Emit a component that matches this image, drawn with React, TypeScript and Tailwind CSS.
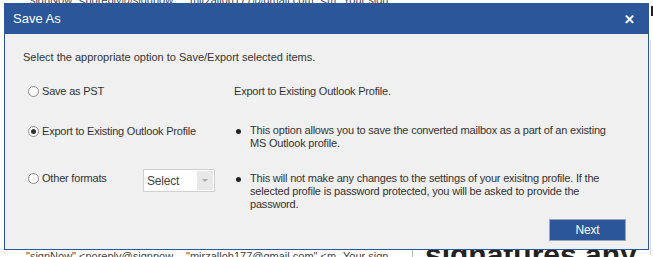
import React from "react";

function Radio({ checked }: { checked?: boolean }) {
  return (
    <span className="w-[11px] h-[11px] rounded-full border border-[#8a8a8a] bg-white flex items-center justify-center shrink-0">
      {checked && <span className="w-[5px] h-[5px] rounded-full bg-[#333]" />}
    </span>
  );
}

function Bullet({ children }: { children: React.ReactNode }) {
  return (
    <div className="flex items-start">
      <span className="w-[5px] h-[5px] rounded-full bg-[#222] mt-[5px] ml-[2px] mr-[9px] shrink-0" />
      <p className="leading-[13px] whitespace-nowrap">{children}</p>
    </div>
  );
}

function MailRow() {
  return (
    <div className="flex text-[11px] text-[#444] whitespace-nowrap">
      <span className="w-[160px] overflow-hidden">"signNow" &lt;noreply@signnow</span>
      <span className="w-[157px] overflow-hidden">"mirzalloh177@gmail.com" &lt;m</span>
      <span className="w-[45px] overflow-hidden">Your sign</span>
    </div>
  );
}

export default function App() {
  return (
    <div
      className="relative w-[653px] h-[257px] bg-white overflow-hidden text-[#333]"
      style={{ fontFamily: '"Liberation Sans", Arial, sans-serif' }}
    >
      {/* page behind the dialog */}
      <div className="absolute left-[26px] -top-[8px]">
        <MailRow />
      </div>
      <div className="absolute left-[26px] top-[248px]">
        <MailRow />
      </div>
      <div className="absolute left-[412px] top-[238px] w-px h-[19px] bg-[#bbb]" />
      <div className="absolute left-[425px] top-[240px] text-[30px] font-bold text-[#222] whitespace-nowrap leading-none">
        signatures any
      </div>
      <div className="absolute left-[651px] top-[6px] w-[2px] h-[10px] bg-[#222]" />
      <div className="absolute left-[650px] top-[40px] w-[3px] h-[215px] border-l border-[#d8d8d8]" />

      {/* dialog */}
      <div className="absolute left-[4px] top-[3px] w-[645px] h-[247px] border border-[#2b579a] bg-[#f0f0f0] flex flex-col">
        <div className="h-[30px] bg-[#2b579a] text-white flex items-center justify-between pl-[8px] pr-[13px] shrink-0">
          <span className="text-[13px]">Save As</span>
          <span className="text-[13px] font-bold leading-none">✕</span>
        </div>
        <div className="flex-1 text-[11px] tracking-[-0.2px] pl-[18px] pr-[20px] pt-[16px] relative">
          <p className="leading-[14px] tracking-[0px]">Select the appropriate option to Save/Export selected items.</p>
          <div className="flex mt-[20px]">
            <div className="w-[211px] flex flex-col">
              <label className="flex items-center gap-[3px] pl-[5px] h-[14px]">
                <Radio />
                <span>Save as PST</span>
              </label>
              <label className="flex items-center gap-[3px] pl-[5px] h-[14px] mt-[26px]">
                <Radio checked />
                <span>Export to Existing Outlook Profile</span>
              </label>
              <div className="flex items-start mt-[33px]">
                <label className="flex items-center gap-[3px] pl-[5px] h-[14px] w-[120px]">
                  <Radio />
                  <span>Other formats</span>
                </label>
                <div className="w-[72px] h-[23px] border border-[#d0d0d0] bg-white flex items-center justify-between pl-[3px] pr-[1px] -mt-[2px]">
                  <span className="text-[#444] text-[12px]">Select</span>
                  <span className="w-[16px] h-[19px] bg-[#e8e8e8] flex items-center justify-center">
                    <span className="w-0 h-0 border-l-[3px] border-r-[3px] border-t-[3px] border-l-transparent border-r-transparent border-t-[#aaa]" />
                  </span>
                </div>
              </div>
            </div>
            <div className="flex-1 flex flex-col">
              <p className="leading-[14px]">Export to Existing Outlook Profile.</p>
              <div className="mt-[26px]">
                <Bullet>
                  This option allows you to save the converted mailbox as a part of an existing
                  <br />
                  MS Outlook profile.
                </Bullet>
              </div>
              <div className="mt-[22px]">
                <Bullet>
                  This will not make any changes to the settings of your exisitng profile. If the
                  <br />
                  selected profile is password protected, you will be asked to provide the
                  <br />
                  password.
                </Bullet>
              </div>
            </div>
          </div>
          <div className="absolute right-[22px] bottom-[8px]">
            <button className="w-[77px] h-[22px] bg-[#2b579a] border border-[#9aa6b8] text-white text-[12px] tracking-[-0.2px]">
              Next
            </button>
          </div>
        </div>
      </div>
    </div>
  );
}
